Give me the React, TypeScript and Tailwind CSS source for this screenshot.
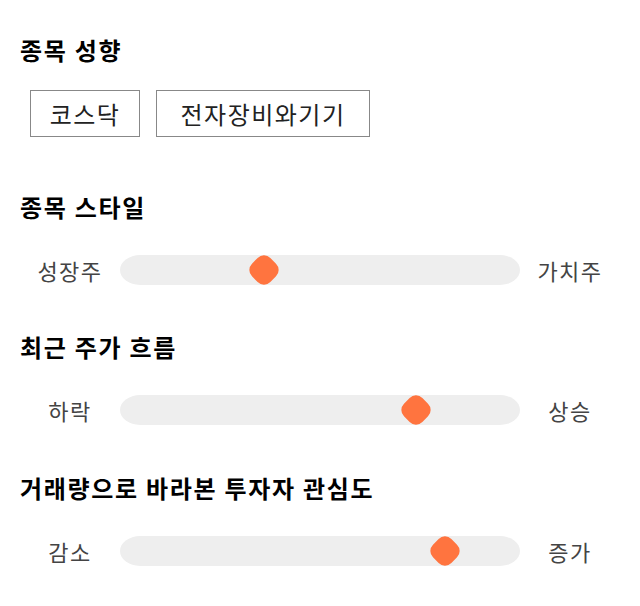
import React from 'react';

const font = { fontFamily: '"Noto Sans CJK KR", "Noto Sans", sans-serif' };

interface Scale {
    title: string;
    left: string;
    right: string;
    pos: number; // thumb centre in px from the track's left edge
    gap: string;
}

const scales: Scale[] = [
    { title: '종목 스타일', left: '성장주', right: '가치주', pos: 144, gap: 'mt-[54px]' },
    { title: '최근 주가 흐름', left: '하락', right: '상승', pos: 296, gap: 'mt-[46px]' },
    { title: '거래량으로 바라본 투자자 관심도', left: '감소', right: '증가', pos: 325, gap: 'mt-[47px]' },
];

function Slider({ left, right, pos }: { left: string; right: string; pos: number }) {
    return (
        <div className="flex items-center h-[30px]">
            <div className="w-[100px] text-center text-[22px] tracking-[1.5px] text-[#444]">{left}</div>
            <div className="relative flex-1 h-[30px] bg-[#eeeeee] rounded-[20px/15px]">
                {/* thumb */}
                <div
                    className="absolute top-[2px] w-[26px] h-[26px] -ml-[13px] rotate-45 rounded-[9px] bg-[#ff743f]"
                    style={{ left: pos }}
                />
            </div>
            <div className="w-[100px] text-center text-[22px] tracking-[1.5px] text-[#444]">{right}</div>
        </div>
    );
}

export default function App() {
    return (
        <div className="w-[640px] h-[606px] bg-white px-5 pt-[34px]" style={font}>
            <h2 className="text-[24px] font-bold text-black leading-[32px] tracking-[1.7px]">종목 성향</h2>
            <div className="mt-[24px] ml-[10px] flex gap-4">
                <div className="w-[110px] h-[47px] flex items-center justify-center border border-[#888] text-[24px] tracking-[1.5px] text-[#222]">코스닥</div>
                <div className="w-[214px] h-[47px] flex items-center justify-center border border-[#888] text-[24px] tracking-[1.5px] text-[#222]">전자장비와기기</div>
            </div>

            {scales.map((s) => (
                <div key={s.title} className={s.gap}>
                    <h2 className="text-[24px] font-bold text-black leading-[32px] tracking-[1.7px]">{s.title}</h2>
                    <div className="mt-[32px]">
                        <Slider left={s.left} right={s.right} pos={s.pos} />
                    </div>
                </div>
            ))}
        </div>
    );
}
